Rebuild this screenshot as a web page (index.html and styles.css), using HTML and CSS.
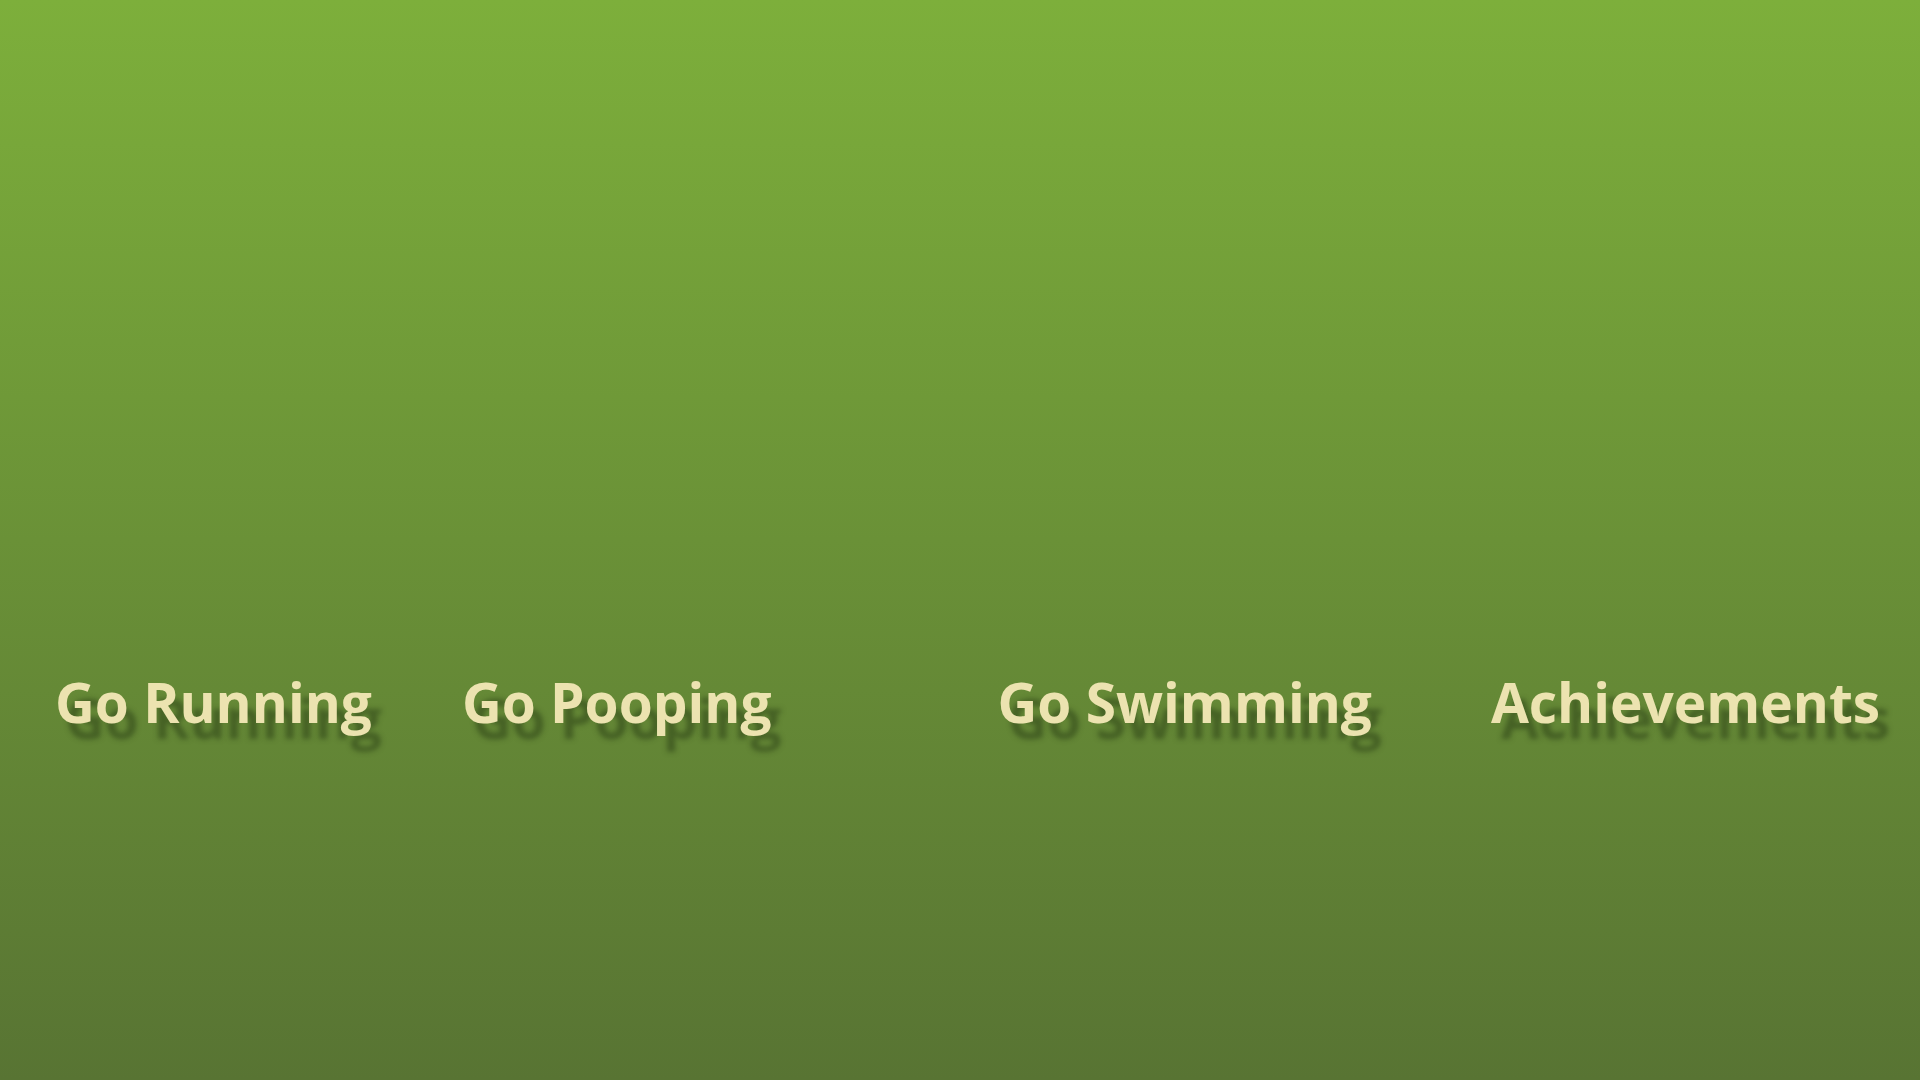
FILE: index.html
```html
<!DOCTYPE html>
<html lang="en">
<head>
<meta charset="utf-8">
<title>Menu</title>
<link rel="stylesheet" href="styles.css">
</head>
<body>
<main class="screen">
  <nav class="menu">
    <a class="menu-item item-running" href="#">Go Running</a>
    <a class="menu-item item-pooping" href="#">Go Pooping</a>
    <a class="menu-item item-swimming" href="#">Go Swimming</a>
    <a class="menu-item item-achievements" href="#">Achievements</a>
  </nav>
</main>
</body>
</html>
```
FILE: styles.css
```css
html, body {
  margin: 0;
  padding: 0;
  height: 100%;
}
body {
  background: linear-gradient(to bottom, #7daf3b 0%, #6a9137 50%, #587433 100%);
  font-family: "Open Sans", "Liberation Sans", sans-serif;
  overflow: hidden;
}
.screen {
  height: 100vh;
  display: flex;
  flex-direction: column;
}
.menu {
  display: flex;
  align-items: baseline;
  padding-top: 674px;
  padding-left: 55px;
}
.menu-item {
  font-size: 55px;
  line-height: 55px;
  font-weight: 700;
  color: #ece3b0;
  text-decoration: none;
  text-shadow: 10px 16px 5px rgba(40, 60, 20, 0.5);
  white-space: nowrap;
}
.item-pooping { margin-left: 90px; }
.item-swimming { margin-left: 226px; }
.item-achievements { margin-left: 119px; }
```
